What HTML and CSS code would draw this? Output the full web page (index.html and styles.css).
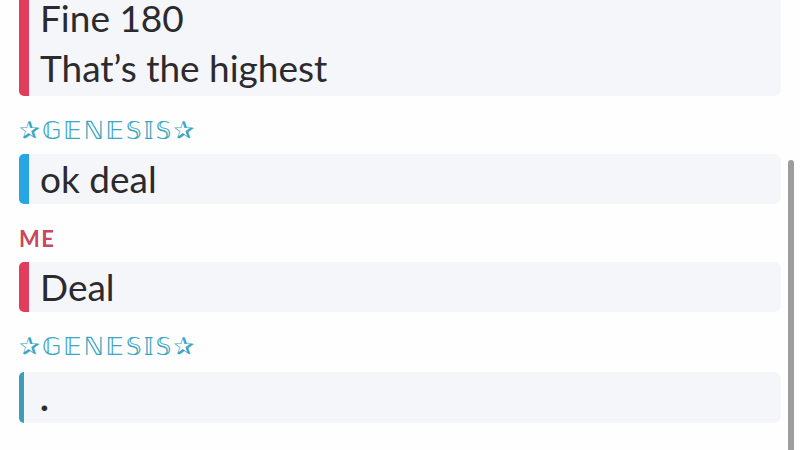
FILE: index.html
```html
<!DOCTYPE html>
<html lang="en">
<head>
  <meta charset="UTF-8" />
  <meta name="viewport" content="width=device-width, initial-scale=1.0" />
  <title>Chat</title>
  <link rel="stylesheet" href="styles.css">
</head>
<body>
  <div class="chat">
    <div class="msg first">
      <div class="bubble me">
        <div>Fine 180</div>
        <div>That’s the highest</div>
      </div>
    </div>

    <div class="msg">
      <div class="name them">✰𝔾𝔼ℕ𝔼𝕊𝕀𝕊✰</div>
      <div class="bubble them">ok deal</div>
    </div>

    <div class="msg">
      <div class="name me">ME</div>
      <div class="bubble me">Deal</div>
    </div>

    <div class="msg last">
      <div class="name them">✰𝔾𝔼ℕ𝔼𝕊𝕀𝕊✰</div>
      <div class="bubble them typing">.</div>
    </div>
  </div>
  <div class="scrollbar"></div>
</body>
</html>
```

FILE: styles.css
```css
* {
  box-sizing: border-box;
}
body {
  margin: 0;
  background: #fefefe;
  font-family: Lato, "Noto Sans", sans-serif;
  color: #2b2b2f;
  overflow: hidden;
  height: 450px;
  position: relative;
}
.chat {
  padding: 0 19px;
  margin-top: -7px;
}
.name {
  height: 58px;
  padding-top: 23px;
  font-size: 22px;
  line-height: 24px;
  font-weight: 700;
  letter-spacing: 1.5px;
}
.name.me {
  color: #c9475f;
}
.name.them {
  font-family: "DejaVu Sans", sans-serif;
  font-weight: normal;
  font-size: 25px;
  letter-spacing: 2px;
  color: #3aa6c2;
}
.last .name {
  height: 60px;
}
.bubble {
  background: #f5f6f9;
  border-left: 10px solid #e03c5c;
  border-radius: 5px 7px 7px 5px;
  padding: 0 0 0 11px;
  font-size: 37px;
  line-height: 50px;
  min-height: 50px;
}
.first .bubble {
  padding-bottom: 3px;
}
.bubble.them {
  border-left-color: #28a6e4;
}
.bubble.typing {
  border-left: 5px solid #3d9cb8;
  padding-left: 16px;
  font-weight: 700;
  min-height: 51px;
}
.scrollbar {
  position: absolute;
  top: 160px;
  left: 788px;
  width: 6px;
  height: 300px;
  background: #9d9d9d;
  border-radius: 3px;
}
```
